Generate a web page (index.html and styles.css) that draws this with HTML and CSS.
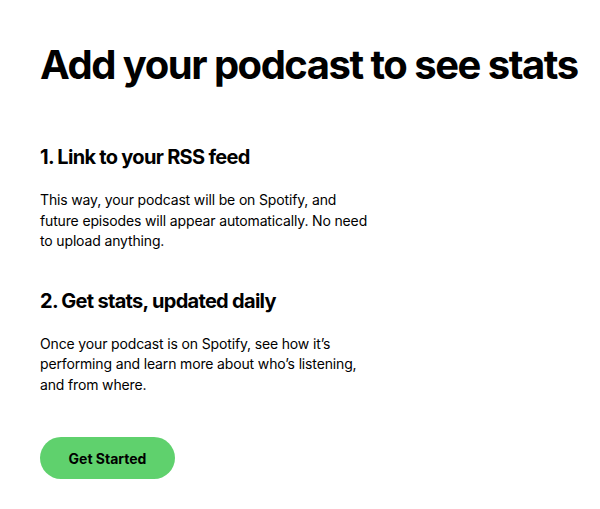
FILE: index.html
```html
<!DOCTYPE html>
<html lang="en">

<head>
    <meta charset="UTF-8">
    <meta name="viewport" content="width=device-width, initial-scale=1.0">
    <title>Podcast stats</title>
    <link rel="stylesheet" href="styles.css">
</head>

<body>

    <main class="intro">
        <h1 class="intro-title">Add your podcast to see stats</h1>

        <section class="step">
            <h2 class="step-title">1. Link to your RSS feed</h2>
            <p class="step-text">This way, your podcast will be on Spotify, and future episodes will appear
                automatically. No need to upload anything.</p>
        </section>

        <section class="step">
            <h2 class="step-title">2. Get stats, updated daily</h2>
            <p class="step-text">Once your podcast is on Spotify, see how it’s performing and learn more about
                who’s listening, and from where.</p>
        </section>

        <button class="start-btn">Get Started</button>
    </main>

</body>

</html>
```

FILE: styles.css
```css
body {
    margin: 0;
    background: #fff;
    color: #000;
    font-family: Inter, "Liberation Sans", sans-serif;
}

.intro {
    padding: 40px 0 0 40px;
    display: flex;
    flex-direction: column;
    align-items: flex-start;
}

.intro-title {
    margin: 0 0 54px;
    font-size: 40px;
    line-height: 50px;
    font-weight: 700;
    letter-spacing: -1.5px;
    white-space: nowrap;
}

.step {
    margin-bottom: 36px;
}

.step-title {
    margin: 0 0 20px;
    font-size: 20px;
    line-height: 26px;
    font-weight: 700;
    letter-spacing: -0.7px;
}

.step-text {
    margin: 0;
    width: 335px;
    font-size: 14px;
    line-height: 20.5px;
    letter-spacing: -0.15px;
    color: #000;
}

.start-btn {
    margin-top: 6px;
    width: 135px;
    height: 42px;
    border: none;
    border-radius: 21px;
    background: #5fd16d;
    color: #000;
    font-family: inherit;
    font-size: 14px;
    font-weight: 700;
    cursor: pointer;
}
```
